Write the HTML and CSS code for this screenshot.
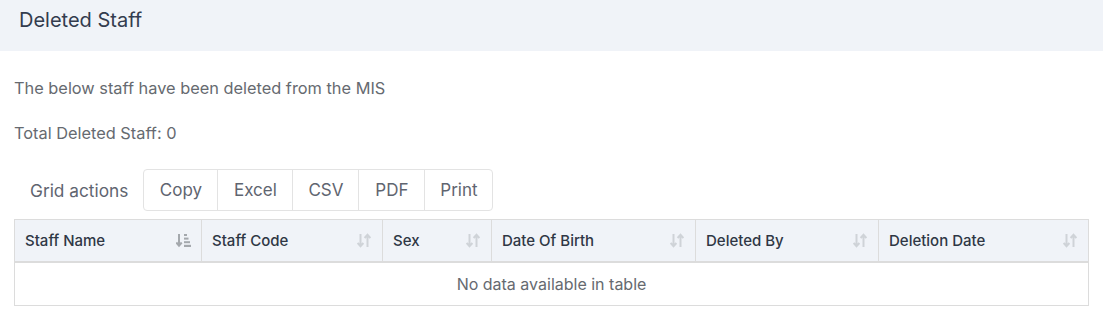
FILE: index.html
```html
<!DOCTYPE html>
<html lang="en">
<head>
  <meta charset="UTF-8">
  <title>Deleted Staff</title>
  <link rel="stylesheet" href="styles.css">
</head>
<body>
  <div class="page-head">Deleted Staff</div>

  <div class="content">
    <p class="intro">The below staff have been deleted from the MIS</p>
    <p class="total">Total Deleted Staff: 0</p>

    <div class="grid-actions">
      <span class="label">Grid actions</span>
      <div class="btn-group">
        <a href="#" class="w-copy">Copy</a>
        <a href="#" class="w-excel">Excel</a>
        <a href="#" class="w-csv">CSV</a>
        <a href="#" class="w-pdf">PDF</a>
        <a href="#" class="w-print">Print</a>
      </div>
    </div>

    <table class="staff-table">
      <colgroup>
        <col style="width:187px">
        <col style="width:181px">
        <col style="width:109px">
        <col style="width:204px">
        <col style="width:183px">
        <col style="width:210px">
      </colgroup>
      <thead>
        <tr>
          <th><span>Staff Name</span>
            <svg class="sort active" width="15" height="15" viewBox="0 0 15 15"><path d="M3 1v11.5M0.3 9.5l2.7 3.2 2.7-3.2" stroke="currentColor" stroke-width="2" fill="none"/><rect x="8" y="1" width="3" height="2" fill="currentColor"/><rect x="8" y="4.6" width="4.5" height="2" fill="currentColor"/><rect x="8" y="8.2" width="6" height="2" fill="currentColor"/><rect x="8" y="11.8" width="7" height="2.2" fill="currentColor"/></svg>
          </th>
          <th><span>Staff Code</span>
            <svg class="sort" width="14" height="15" viewBox="0 0 14 15"><path d="M3.5 1v12M0.6 10l2.9 3.2 2.9-3.2M10.5 14V2M7.6 5l2.9-3.2 2.9 3.2" stroke="currentColor" stroke-width="2" fill="none"/></svg>
          </th>
          <th><span>Sex</span>
            <svg class="sort" width="14" height="15" viewBox="0 0 14 15"><path d="M3.5 1v12M0.6 10l2.9 3.2 2.9-3.2M10.5 14V2M7.6 5l2.9-3.2 2.9 3.2" stroke="currentColor" stroke-width="2" fill="none"/></svg>
          </th>
          <th><span>Date Of Birth</span>
            <svg class="sort" width="14" height="15" viewBox="0 0 14 15"><path d="M3.5 1v12M0.6 10l2.9 3.2 2.9-3.2M10.5 14V2M7.6 5l2.9-3.2 2.9 3.2" stroke="currentColor" stroke-width="2" fill="none"/></svg>
          </th>
          <th><span>Deleted By</span>
            <svg class="sort" width="14" height="15" viewBox="0 0 14 15"><path d="M3.5 1v12M0.6 10l2.9 3.2 2.9-3.2M10.5 14V2M7.6 5l2.9-3.2 2.9 3.2" stroke="currentColor" stroke-width="2" fill="none"/></svg>
          </th>
          <th><span>Deletion Date</span>
            <svg class="sort" width="14" height="15" viewBox="0 0 14 15"><path d="M3.5 1v12M0.6 10l2.9 3.2 2.9-3.2M10.5 14V2M7.6 5l2.9-3.2 2.9 3.2" stroke="currentColor" stroke-width="2" fill="none"/></svg>
          </th>
        </tr>
      </thead>
      <tbody>
        <tr><td colspan="6" class="empty">No data available in table</td></tr>
      </tbody>
    </table>
  </div>
</body>
</html>
```

FILE: styles.css
```css
* { box-sizing: border-box; }
body {
  margin: 0;
  font-family: Inter, "Noto Sans", sans-serif;
  background: #fff;
  color: #5f6570;
}
.page-head {
  background: #f0f3f8;
  height: 51px;
  padding: 8px 19px 0;
  font-size: 20px;
  line-height: 24px;
  color: #333c4e;
}
.content { padding: 0 14px; }
.intro {
  margin: 0;
  padding-top: 27px;
  font-size: 16.35px;
  line-height: 20px;
  color: #666a70;
}
.total {
  margin: 0;
  padding-top: 25px;
  font-size: 16.35px;
  line-height: 20px;
  color: #666a70;
}
.grid-actions {
  display: flex;
  align-items: center;
  margin-top: 26px;
}
.grid-actions .label {
  font-size: 17.3px;
  color: #5f6570;
  padding: 0 15px 0 16px;
}
.btn-group {
  display: flex;
  border: 1px solid #e3e3e3;
  border-radius: 4px;
}
.btn-group a {
  height: 40px;
  display: flex;
  align-items: center;
  justify-content: center;
  font-size: 17px;
  color: #5f6570;
  text-decoration: none;
  border-left: 1px solid #e3e3e3;
}
.btn-group a:first-child { border-left: 0; }
.w-copy { width: 73px; }
.w-excel { width: 75px; }
.w-csv { width: 66px; }
.w-pdf { width: 66px; }
.w-print { width: 68px; }
.staff-table {
  width: 1074px;
  margin-top: 8px;
  border-collapse: collapse;
  table-layout: fixed;
  border: 1px solid #dcdcdc;
}
.staff-table th {
  background: #f0f3f8;
  height: 42px;
  padding: 0 10px;
  font-size: 15px;
  font-weight: 500;
  color: #2f3745;
  text-align: left;
  border-left: 1px solid #dcdcdc;
  border-bottom: 2px solid #dcdcdc;
  position: relative;
}
.staff-table th:first-child { border-left: 0; }
.staff-table th .sort {
  position: absolute;
  right: 11px;
  top: 13px;
  color: #cfd3d8;
}
.staff-table th .sort.active { color: #a4a8ad; right: 10px; }
.staff-table td.empty {
  height: 44px;
  text-align: center;
  font-size: 16px;
  color: #666a70;
}
```
